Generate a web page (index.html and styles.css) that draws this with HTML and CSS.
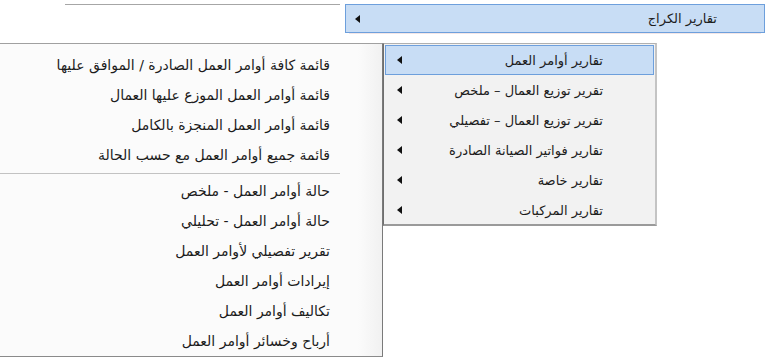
FILE: index.html
```html
<!DOCTYPE html>
<html>
<head>
	<title>تقارير الكراج</title>
	<link rel="stylesheet" href="styles.css">
</head>
<body>
	<div class="top-row">
		<div class="top-line"></div>
		<div class="menu-bar" dir="rtl">
			<span class="label">تقارير الكراج</span>
			<span class="arrow"></span>
		</div>
	</div>
	<div class="menus">
		<div class="menu work-list" dir="rtl">
			<div class="item">قائمة كافة أوامر العمل الصادرة / الموافق عليها</div>
			<div class="item">قائمة أوامر العمل الموزع عليها العمال</div>
			<div class="item">قائمة أوامر العمل المنجزة بالكامل</div>
			<div class="item">قائمة جميع أوامر العمل مع حسب الحالة</div>
			<div class="separator"></div>
			<div class="item">حالة أوامر العمل - ملخص</div>
			<div class="item">حالة أوامر العمل - تحليلي</div>
			<div class="item">تقرير تفصيلي لأوامر العمل</div>
			<div class="item">إيرادات أوامر العمل</div>
			<div class="item">تكاليف أوامر العمل</div>
			<div class="item">أرباح وخسائر أوامر العمل</div>
		</div>
		<div class="menu reports" dir="rtl">
			<div class="item active"><span class="label">تقارير أوامر العمل</span><span class="arrow"></span></div>
			<div class="item"><span class="label">تقرير توزيع العمال – ملخص</span><span class="arrow"></span></div>
			<div class="item"><span class="label">تقرير توزيع العمال – تفصيلي</span><span class="arrow"></span></div>
			<div class="item"><span class="label">تقارير فواتير الصيانة الصادرة</span><span class="arrow"></span></div>
			<div class="item"><span class="label">تقارير خاصة</span><span class="arrow"></span></div>
			<div class="item"><span class="label">تقارير المركبات</span><span class="arrow"></span></div>
		</div>
	</div>
</body>
</html>
```

FILE: styles.css
```css
body {
	margin: 0;
	background: #fff;
	font-family: "DejaVu Sans", sans-serif;
	font-size: 13px;
	color: #1c1c1c;
}
.top-row {
	display: flex;
	align-items: flex-start;
	height: 43px;
	border-bottom: 1px solid transparent;
}
.top-line {
	margin: 4px 5px 0 65px;
	width: 275px;
	border-top: 1px solid #a6a6a6;
}
.menu-bar {
	margin-top: 4px;
	width: 420px;
	height: 29px;
	box-sizing: border-box;
	display: flex;
	align-items: center;
	padding: 0 47px 0 9px;
	background: #c8ddf5;
	border: 1px solid #6d9fdc;
	box-shadow: 0 5px 0 -4px #f3e6e6;
}
.arrow {
	width: 0;
	height: 0;
	border-style: solid;
	border-width: 4px 5px 4px 0;
	border-color: transparent #111 transparent transparent;
	margin-inline-start: auto;
}
.menus {
	display: flex;
	align-items: flex-start;
	margin-top: -1px;
}
.menu {
	box-sizing: border-box;
}
.work-list {
	width: 383px;
	height: 314px;
	padding-top: 6px;
	font-size: 14px;
	background: linear-gradient(to left, #f1f1f1, #fbfbfb 24px);
	border-top: 1px solid #a0a0a0;
	border-right: 1px solid #7a7a7a;
	border-bottom: 1px solid #8a8a8a;
}
.work-list .item {
	height: 30px;
	line-height: 30px;
	padding-right: 52px;
}
.separator {
	height: 6px;
	margin: 0 42px 0 0;
	background: linear-gradient(#c2c2c2, #c2c2c2) center / 100% 1px no-repeat;
}
.reports {
	width: 274px;
	height: 183px;
	padding: 1px 1px 0;
	background: #f2f2f2;
	border-top: 1px solid #b0b0b0;
	border-left: 1px solid #6e6e6e;
	border-right: 2px solid #c4c4c4;
	border-bottom: 2px solid #9a9a9a;
}
.reports .item {
	display: flex;
	align-items: center;
	height: 30px;
	box-sizing: border-box;
	padding: 0 50px 0 11px;
	border: 1px solid transparent;
}
.reports .item.active {
	background: #c8ddf5;
	border-color: #6d9fdc;
}
```
